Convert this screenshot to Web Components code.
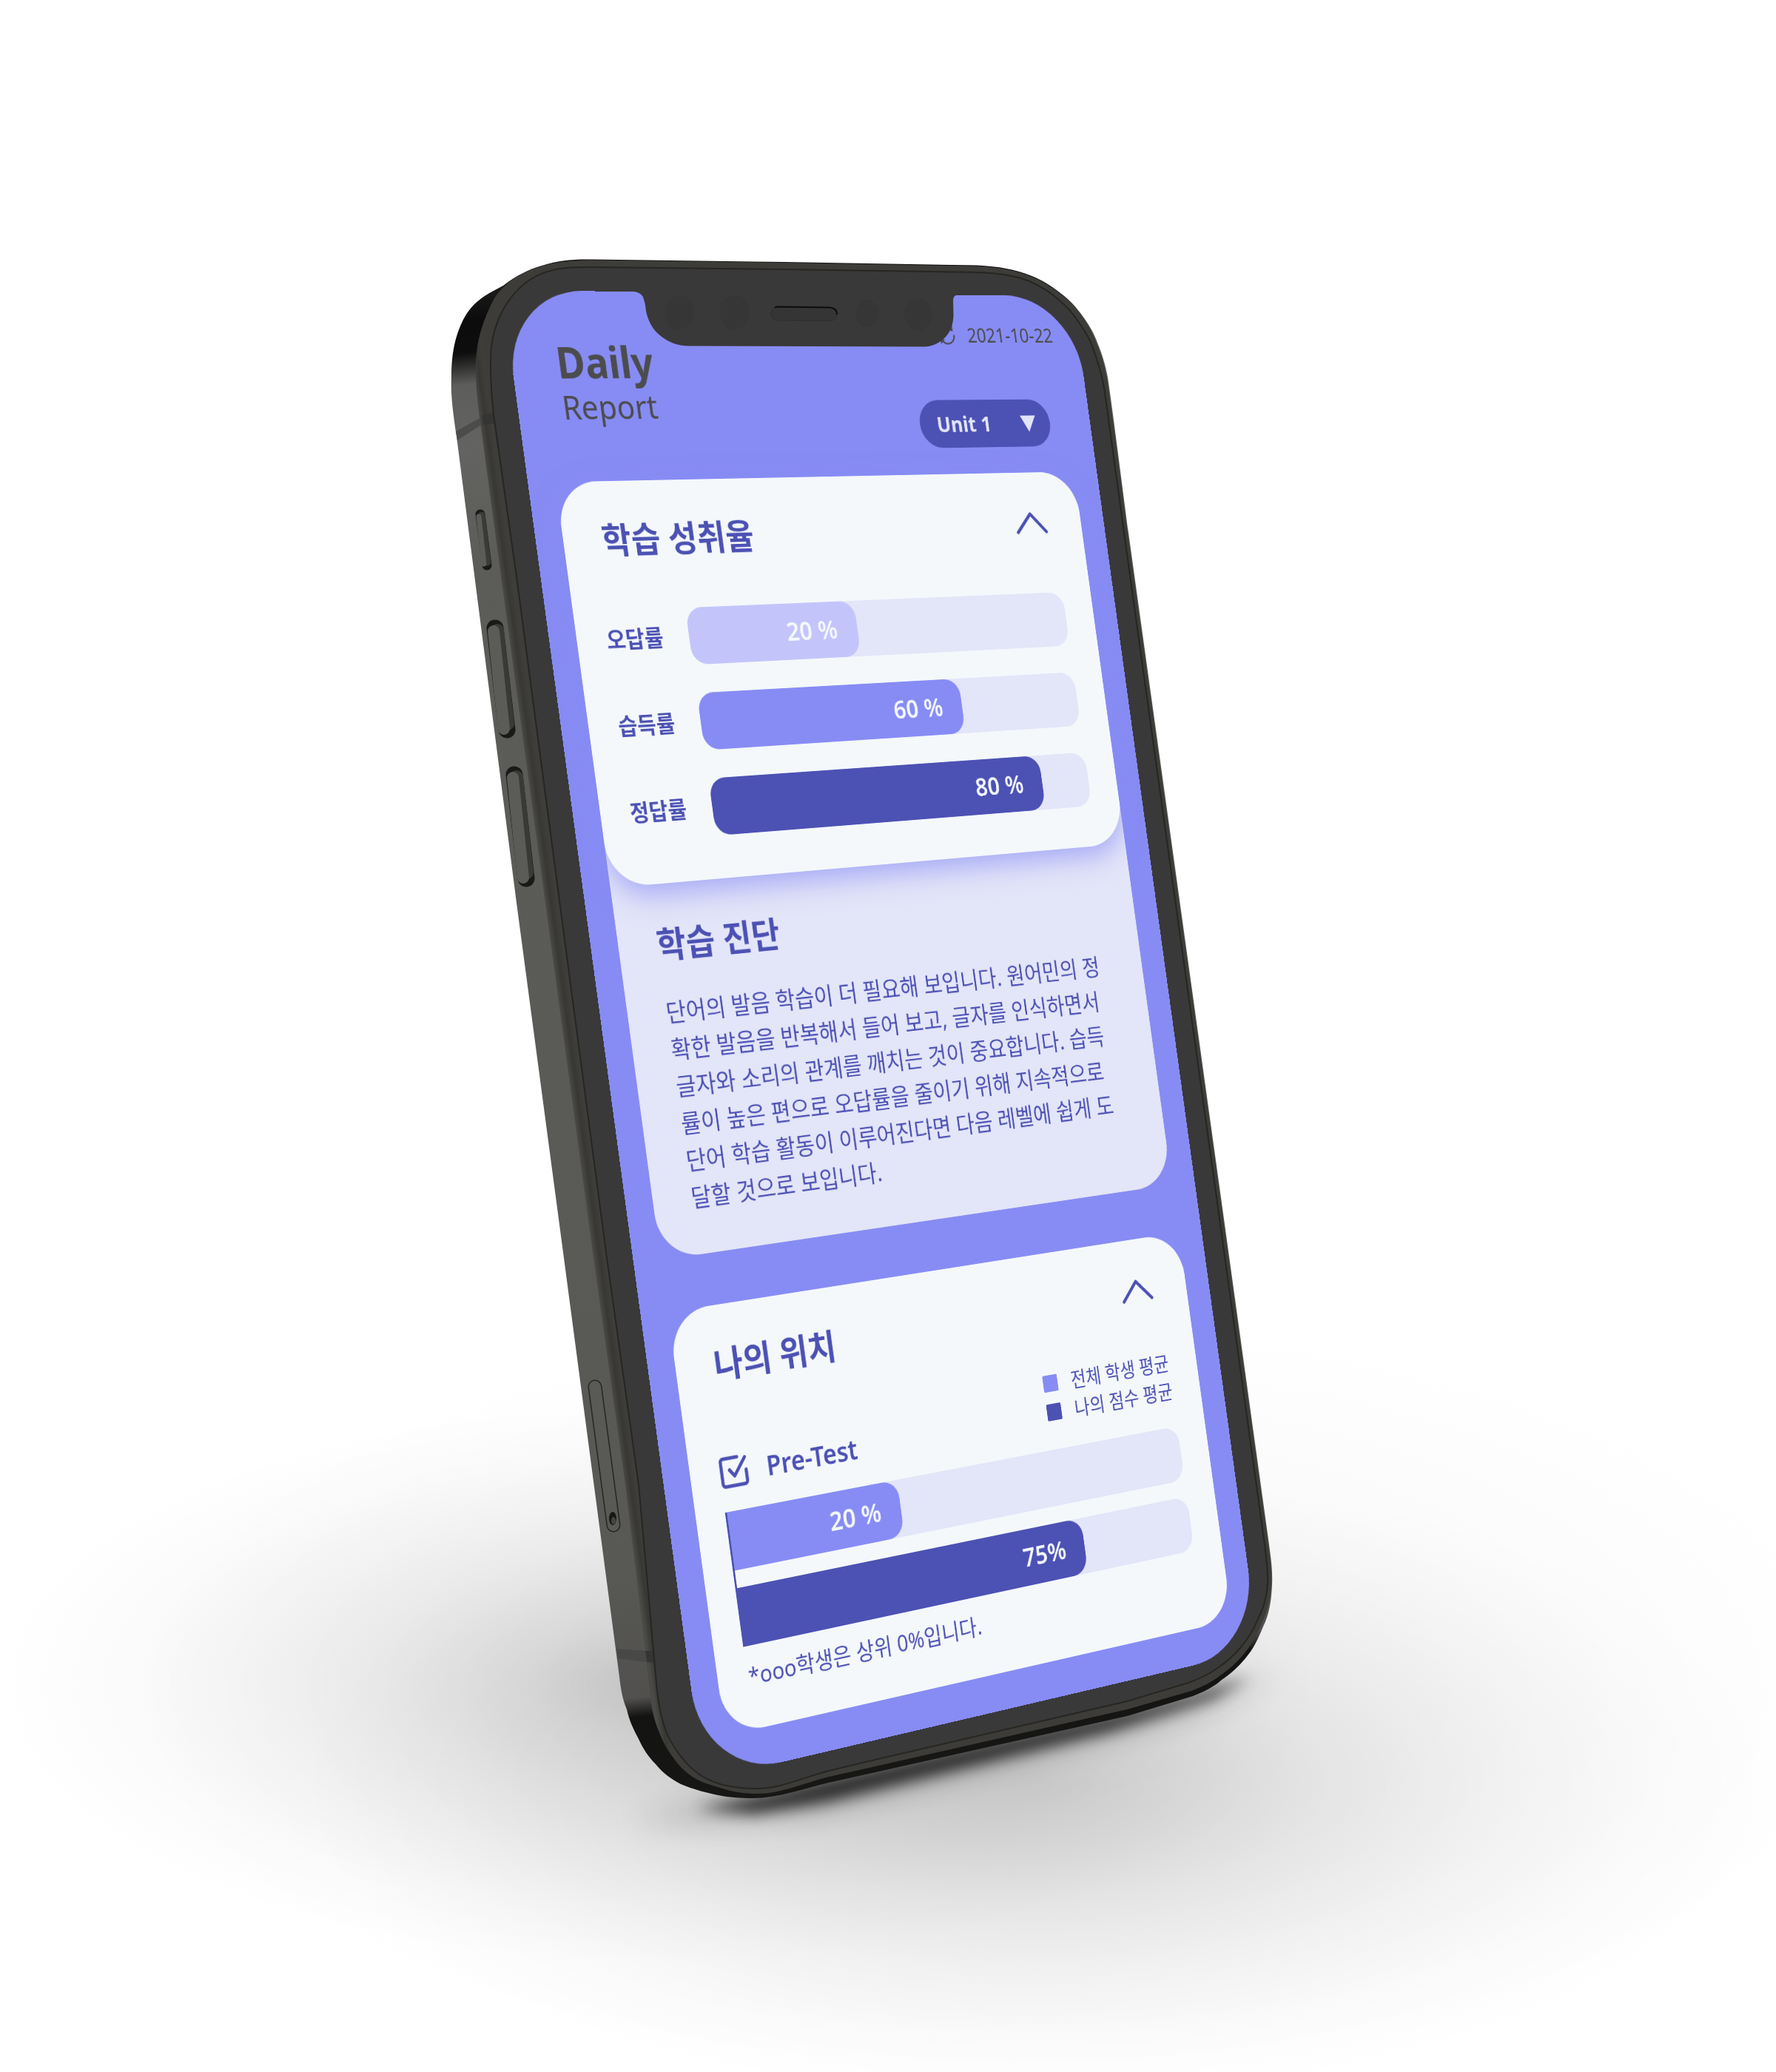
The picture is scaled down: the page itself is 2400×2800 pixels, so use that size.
<!DOCTYPE html>
<html lang="ko">
<head>
<meta charset="utf-8">
<meta name="viewport" content="width=device-width, initial-scale=1">
<title>Daily Report</title>
<style>
  html { background: #fff; }
  body { margin: 0; font-family: "Noto Sans", "Noto Sans CJK KR", sans-serif; color: #4c51b4; }
</style>
</head>
<body>
<phone-stage>
  <report-app>
    <report-header slot="header" date="2021-10-22"></report-header>
    <stacked-card>
      <report-card heading="학습 성취율" raised>
        <rate-list>
          <rate-row label="오답률" value="20 %" fill="43" tone="pale"></rate-row>
          <rate-row label="습득률" value="60 %" fill="68" tone="mid"></rate-row>
          <rate-row label="정답률" value="80 %" fill="87" tone="deep"></rate-row>
        </rate-list>
      </report-card>
      <diagnosis-note slot="below" heading="학습 진단">단어의 발음 학습이 더 필요해 보입니다. 원어민의 정확한 발음을 반복해서 들어 보고, 글자를 인식하면서 글자와 소리의 관계를 깨치는 것이 중요합니다. 습득률이 높은 편으로 오답률을 줄이기 위해 지속적으로 단어 학습 활동이 이루어진다면 다음 레벨에 쉽게 도달할 것으로 보입니다.</diagnosis-note>
    </stacked-card>
    <report-card heading="나의 위치">
      <rank-chart test="Pre-Test">
        <rate-bar value="20 %" fill="36" tone="mid" flush></rate-bar>
        <rate-bar value="75%" fill="75" tone="deep" flush></rate-bar>
        <span slot="note">*ooo학생은 상위 0%입니다.</span>
      </rank-chart>
    </report-card>
  </report-app>
</phone-stage>

<script>
const define = (name, html, setup) => {
  const template = document.createElement('template');
  template.innerHTML = html;
  customElements.define(name, class extends HTMLElement {
    connectedCallback() {
      if (this.shadowRoot) return;
      this.attachShadow({ mode: 'open' }).append(template.content.cloneNode(true));
      if (setup) setup(this, this.shadowRoot);
    }
  });
};

/* Maps a w×h rectangle onto four corners (top-left, top-right, bottom-right, bottom-left). */
function planeMatrix(w, h, [p0, p1, p2, p3]) {
  const dx1 = p1[0] - p2[0], dx2 = p3[0] - p2[0], dx3 = p0[0] - p1[0] + p2[0] - p3[0];
  const dy1 = p1[1] - p2[1], dy2 = p3[1] - p2[1], dy3 = p0[1] - p1[1] + p2[1] - p3[1];
  const den = dx1 * dy2 - dx2 * dy1;
  const g = (dx3 * dy2 - dx2 * dy3) / den, k = (dx1 * dy3 - dx3 * dy1) / den;
  const a = p1[0] - p0[0] + g * p1[0], b = p3[0] - p0[0] + k * p3[0];
  const d = p1[1] - p0[1] + g * p1[1], e = p3[1] - p0[1] + k * p3[1];
  return `matrix3d(${[a / w, d / w, 0, g / w, b / h, e / h, 0, k / h, 0, 0, 1, 0, p0[0], p0[1], 0, 1].join(',')})`;
}

define('phone-stage', `
<style>
  :host { display: block; position: relative; width: 100%; aspect-ratio: 2400 / 2800; overflow: hidden; }
  svg { position: absolute; inset: 0; width: 100%; height: 100%; pointer-events: none; }
  .plane { position: absolute; top: 0; left: 0; width: 975px; height: 2110px; transform-origin: 0 0;
    border-radius: 126px; overflow: hidden; background: #878cf4; }
</style>
<svg viewBox="0 0 2400 2800" aria-hidden="true">
  <defs>
    <filter id="b1" x="-50%" y="-50%" width="200%" height="200%"><feGaussianBlur stdDeviation="10"/></filter>
    <filter id="b2" x="-50%" y="-50%" width="200%" height="200%"><feGaussianBlur stdDeviation="20"/></filter>
    <radialGradient id="faint"><stop offset="0" stop-color="#000" stop-opacity=".03"/><stop offset=".5" stop-color="#000" stop-opacity=".022"/><stop offset="1" stop-color="#000" stop-opacity="0"/></radialGradient>
    <radialGradient id="left"><stop offset="0" stop-color="#000" stop-opacity=".19"/><stop offset=".2" stop-color="#000" stop-opacity=".125"/><stop offset=".4" stop-color="#000" stop-opacity=".08"/><stop offset=".6" stop-color="#000" stop-opacity=".045"/><stop offset=".8" stop-color="#000" stop-opacity=".016"/><stop offset="1" stop-color="#000" stop-opacity="0"/></radialGradient>
    <radialGradient id="right"><stop offset="0" stop-color="#000" stop-opacity=".17"/><stop offset=".2" stop-color="#000" stop-opacity=".13"/><stop offset=".4" stop-color="#000" stop-opacity=".08"/><stop offset=".6" stop-color="#000" stop-opacity=".043"/><stop offset=".8" stop-color="#000" stop-opacity=".016"/><stop offset="1" stop-color="#000" stop-opacity="0"/></radialGradient>
    <linearGradient id="side" gradientUnits="userSpaceOnUse" x1="600" y1="330" x2="830" y2="2450">
      <stop offset="0" stop-color="#111"/><stop offset=".03" stop-color="#1c1c1b"/><stop offset=".05" stop-color="#0b0b0b"/><stop offset=".07" stop-color="#0e0e0e"/>
      <stop offset=".09" stop-color="#5d5d5b"/><stop offset=".13" stop-color="#636361"/><stop offset=".2" stop-color="#5c5c59"/>
      <stop offset=".85" stop-color="#585855"/><stop offset=".929" stop-color="#51504e"/><stop offset=".941" stop-color="#131312"/><stop offset="1" stop-color="#171715"/>
    </linearGradient>
    <linearGradient id="rim" gradientUnits="userSpaceOnUse" x1="745" y1="1280" x2="767" y2="1277">
      <stop offset="0" stop-color="#4a4a47"/><stop offset=".35" stop-color="#383734"/><stop offset=".7" stop-color="#3f3e3a"/><stop offset="1" stop-color="#3d3c39"/>
    </linearGradient>
  </defs>
  <ellipse cx="1350" cy="2290" rx="1200" ry="520" fill="url(#faint)"/>
  <ellipse cx="890" cy="2275" rx="900" ry="380" fill="url(#left)"/>
  <ellipse cx="1400" cy="2410" rx="1000" ry="430" fill="url(#right)"/>
  <path d="M850 2462L1010 2424L1730 2262L1600 2316L1100 2446Z" fill="#000" opacity=".28" filter="url(#b2)"/>
  <path d="M940 2444L1030 2426L1120 2404L1523 2312L1610 2290L1690 2266L1640 2295L1500 2340L1120 2434L1020 2451Z" fill="#000" opacity=".74" filter="url(#b1)"/>

  <path d="M610 510C610 475 616 452 626 432C640 405 660 397 680 386C698 372 715 364 732 359C752 353 768 350 800 350.500L1060 354L1320 358.500C1350 360 1372 364 1393 372.500C1407 378 1417 384 1427 391.500C1442 402 1451 411 1460 423C1470 436 1478 449 1483 463C1490 480 1494 494 1497 510C1501 535 1512 620 1525 720L1653 1640L1714 2080C1717 2103 1720 2120 1719 2142C1718 2164 1715 2182 1707 2198C1700 2215 1694 2228 1683 2241C1673 2253 1663 2262 1651 2270C1640 2280 1627 2286 1612 2292L1523 2319L1174 2397L1120 2409C1085 2417 1052 2430 1017 2430C1000 2430 988 2429 976 2427C955 2423 937 2418 920 2411C905 2403 896 2396 886 2384C876 2374 869 2363 863 2350C856 2337 850 2324 847 2310C841 2296 839 2283 837 2266L762 1700L698 1220L617 590C611 550 609 530 610 510Z" fill="url(#side)"/>
  <path d="M616 583L652 563L667 557L668 571L652 573L618 595Z" fill="#4c4c4b"/>

  <path d="M643 500C642 465 652 433 668 403C676 391 688 380 700 373C722 361 748 352 800 351.500L1060 355L1320 359.500C1350 361 1372 365 1393 373.500C1407 379 1417 385 1427 392.500C1442 403 1451 412 1460 424C1470 437 1477 450 1482 464C1489 481 1493 495 1496 511C1500 536 1511 620 1524 720L1652 1640L1713 2080C1716 2103 1719 2120 1718 2139C1717 2160 1713 2178 1705 2194C1699 2210 1691 2222 1681 2235C1671 2247 1661 2256 1649 2264C1638 2273 1625 2279 1610 2285L1523 2310L1174 2389L1120 2401C1085 2410 1055 2424 1022 2424C1002 2424 984 2420 967 2414C950 2409 941 2405 933 2399C923 2392 915 2383 909 2374C901 2364 895 2352 891 2341C885 2328 881 2312 879 2295L872 2230L845 2006L802 1700L677 779L650 578C645 545 643 520 643 500Z" fill="url(#rim)"/>
  <path d="M651 562L668 556L670 572L653 574ZM872 2231L888 2231L890 2247L874 2246Z" fill="#353534"/>
  <path d="M833 2228L872 2231L874 2246L835 2241Z" fill="#484847"/>

  <path d="M663 490C663 465 666 450 675 428C684 409 698 390 716 378C738 364 760 360.500 800 361L1060 364L1320 368C1350 369 1372 372 1391 380C1407 387 1418 394 1427 402C1441 413 1450 423 1458 436C1468 449 1475 463 1480 479C1486 496 1490 510 1493 530C1497 555 1508 640 1519 720L1647 1640L1708 2080C1711 2103 1714 2120 1713 2139C1712 2158 1708 2173 1700 2188C1694 2203 1686 2215 1676 2227C1666 2239 1656 2247 1644 2255C1632 2264 1620 2269 1606 2274L1523 2299L1174 2380L1120 2393C1085 2402 1055 2417 1022 2417C1003 2417 988 2415 973 2411C958 2406 948 2401 940 2394C930 2386 922 2377 916 2368C909 2358 904 2350 901 2342C895 2327 890 2310 887 2275L863 2006L820 1700L698 779L667 560C664 535 663 510 663 490Z" fill="#393939" stroke="#262622" stroke-width="2"/>

  <g stroke-linecap="round" fill="none">
    <path d="M649 695L658 764" stroke="#191918" stroke-width="13"/><path d="M651 696L659 760" stroke="#3a3a38" stroke-width="9"/><path d="M647 698L654 762" stroke="#5b5b58" stroke-width="7"/>
    <path d="M669 849L685 986" stroke="#191918" stroke-width="23"/><path d="M672 852L686 978" stroke="#393937" stroke-width="18"/><path d="M667 853L681 985" stroke="#5b5b58" stroke-width="16"/>
    <path d="M695 1047L711 1187" stroke="#191918" stroke-width="23"/><path d="M698 1050L712 1179" stroke="#393937" stroke-width="18"/><path d="M693 1051L707 1186" stroke="#5b5b58" stroke-width="16"/>
    <path d="M804 1874L829 2061" stroke="#262624" stroke-width="19"/><path d="M804 1874L829 2061" stroke="#595956" stroke-width="16"/>
  </g>
  <ellipse cx="828" cy="2052" rx="5" ry="9" fill="#171716"/><ellipse cx="829" cy="2055" rx="3" ry="5" fill="#454543"/>
</svg>
<div class="plane"><slot></slot></div>
<svg viewBox="0 0 2400 2800" aria-hidden="true">
  <path d="M850 385L852 393.500C863 394 869 398 870 405C873 412 872 420 875 428C880 443 888 451 897 457C907 464 917 467 930 467.500L1250 468.500C1262 468 1273 461 1279 454C1286 445 1288 437 1288.500 426L1288 407C1288 401 1290 398.500 1296 398.500L1300 388Z" fill="#393939"/>
  <g fill="#363636"><ellipse cx="918" cy="422" rx="20" ry="23"/><ellipse cx="993" cy="422" rx="20" ry="23"/><ellipse cx="1172" cy="424" rx="16" ry="18"/><ellipse cx="1241" cy="425" rx="19" ry="21"/></g>
  <path d="M1051 414.500L1121 415.500C1128 416 1131 420 1131 424.500C1131 429 1128 432 1124 433.500L1052 433C1045 433 1042 429 1042 424C1042 419 1045 415 1051 414.500Z" fill="#353535" stroke="#2e2e2e" stroke-width="1"/>
  <path d="M1047 415.500L1051 414.500L1121 415.500C1128 416 1131 420 1131 425" fill="none" stroke="#0c0c0c" stroke-width="2"/>
</svg>
`, (host, root) => {
  const plane = root.querySelector('.plane');
  const corners = [[678, 392.2], [1449.4, 400.2], [1702, 2230], [951, 2406.5]];
  const fit = () => {
    const s = host.clientWidth / 2400;
    plane.style.transform = planeMatrix(975, 2110, corners.map(p => [p[0] * s, p[1] * s]));
  };
  fit();
  new ResizeObserver(fit).observe(host);
});

define('report-app', `
<style>
  :host { display: flex; flex-direction: column; gap: 40px; height: 100%; box-sizing: border-box; padding-top: 42px; }
  main { display: flex; flex-direction: column; gap: 74px; padding: 0 43px; }
</style>
<slot name="header"></slot>
<main><slot></slot></main>`);

define('report-header', `
<style>
  :host { display: flex; justify-content: space-between; align-items: flex-start; padding: 0 48px 0 70px; color: #4c4c4e; }
  h1 { margin: 0; padding-top: 26px; font-weight: 400; font-size: 48px; line-height: 62px; }
  strong { display: block; font-size: 62px; line-height: 68px; font-weight: 700; }
  .tools { display: flex; flex-direction: column; align-items: flex-end; gap: 79px; }
  .date { display: flex; align-items: center; gap: 20px; font-size: 30px; line-height: 40px; }
  .date svg { width: 32px; height: 32px; }
  .unit { position: relative; margin-right: 27px; }
  select { appearance: none; display: block; width: 236px; height: 73px; border: 0; border-radius: 37px; padding: 0 0 0 30px;
    background: #4c51b4; color: #e2e4f8; font: 700 33px/40px "Noto Sans", "Noto Sans CJK KR", sans-serif; }
  .unit svg { position: absolute; right: 26px; top: 25px; width: 28px; height: 25px; pointer-events: none; }
</style>
<h1><strong>Daily</strong>Report</h1>
<div class="tools">
  <div class="date">
    <svg viewBox="0 0 24 24" fill="none" stroke="currentColor" stroke-width="2" aria-hidden="true">
      <path d="M21.500 11.500a9.500 9.500 0 0 1-16 7.500M2.500 12.500a9.500 9.500 0 0 1 16-7.500"/>
      <path d="M20.500 1v6.500l-6-1.500zM2.500 22v-6.500l6 1.500z" fill="currentColor" stroke="none"/>
    </svg>
    <time></time>
  </div>
  <div class="unit">
    <select aria-label="Unit"><option>Unit 1</option></select>
    <svg viewBox="0 0 28 25" aria-hidden="true"><path d="M0 0h28L14 25z" fill="#e2e4f8"/></svg>
  </div>
</div>`, (host, root) => { root.querySelector('time').textContent = host.getAttribute('date'); });

define('stacked-card', `
<style>
  :host { display: flex; flex-direction: column; background: #e3e5f8; border-radius: 65px; }
</style>
<slot></slot><slot name="below"></slot>`);

define('report-card', `
<style>
  :host { display: block; background: #f4f8fb; border-radius: 65px; padding: 48px 52px 0 47px; }
  :host([raised]) { box-shadow: 0 14px 42px rgba(135, 140, 244, .68); }
  header { display: flex; justify-content: space-between; align-items: flex-start; padding: 0 11px 0 14px; }
  h2 { margin: 0; font-size: 51px; line-height: 72px; font-weight: 700; }
  button { appearance: none; border: 0; background: none; color: inherit; padding: 13px 0; height: 60px; }
  svg { display: block; width: 58px; height: 34px; }
</style>
<header><h2></h2><button type="button" aria-label="접기"><svg viewBox="0 0 58 34" fill="none" stroke="currentColor" stroke-width="5" stroke-linecap="round" stroke-linejoin="round"><path d="M3 31L29 3L55 31"/></svg></button></header>
<slot></slot>`, (host, root) => { root.querySelector('h2').textContent = host.getAttribute('heading'); });

define('rate-list', `
<style>
  :host { display: flex; flex-direction: column; gap: 41px; padding: 66px 0 62px; }
</style>
<slot></slot>`);

const barCss = `
  .track { flex: 1; height: 83px; border-radius: 26px; background: #e3e5f8; }
  .fill { display: flex; align-items: center; justify-content: flex-end; box-sizing: border-box; height: 100%; padding: 0 34px 4px 0;
    border-radius: 26px; color: #f4f8fb; font-size: 38px; line-height: 56px; font-weight: 600; }
  :host([flush]) .track, :host([flush]) .fill { border-top-left-radius: 0; border-bottom-left-radius: 0; }
  :host([tone=pale]) .fill { background: #c3c5fa; }
  :host([tone=mid]) .fill { background: #878cf4; }
  :host([tone=deep]) .fill { background: #4c51b4; }`;
const setBar = (host, root) => {
  const fill = root.querySelector('.fill');
  fill.style.width = host.getAttribute('fill') + '%';
  fill.textContent = host.getAttribute('value');
};

define('rate-bar', `<style>:host { display: flex; } ${barCss}</style><div class="track"><div class="fill"></div></div>`, setBar);

define('rate-row', `
<style>
  :host { display: flex; align-items: center; }
  .label { width: 133px; font-size: 33px; line-height: 48px; font-weight: 700; white-space: nowrap; }
  ${barCss}
</style>
<span class="label"></span><div class="track"><div class="fill"></div></div>`, (host, root) => {
  root.querySelector('.label').textContent = host.getAttribute('label');
  setBar(host, root);
});

define('diagnosis-note', `
<style>
  :host { display: block; padding: 49px 58px 54px; }
  h2 { margin: 0; padding-left: 3px; font-size: 51px; line-height: 74px; font-weight: 700; }
  p { margin: 34px 0 0; padding-left: 3px; font-size: 35px; line-height: 53px; }
</style>
<h2></h2><p><slot></slot></p>`, (host, root) => { root.querySelector('h2').textContent = host.getAttribute('heading'); });

define('rank-chart', `
<style>
  :host { display: block; padding-bottom: 49px; }
  .top { display: flex; justify-content: space-between; align-items: flex-end; padding-top: 52px; }
  label { position: relative; display: flex; align-items: center; gap: 28px; height: 43px; font-size: 39px; line-height: 43px; font-weight: 600; }
  input { position: absolute; opacity: 0; margin: 0; width: 50px; height: 50px; }
  label svg { width: 50px; height: 50px; margin-left: -2px; }
  ul { list-style: none; margin: 0; padding: 0; font-size: 30px; line-height: 43px; }
  li { display: flex; align-items: center; gap: 24px; }
  li::before { content: ""; width: 26px; height: 25px; border-radius: 2px; background: #878cf4; }
  li + li::before { background: #4c51b4; }
  .bars { display: flex; flex-direction: column; gap: 25px; margin-top: 34px; border-left: 3px solid #4c51b4; }
  p { margin: 18px 0 0; padding-left: 2px; font-size: 33px; line-height: 50px; }
</style>
<div class="top">
  <label><input type="checkbox" checked>
    <svg viewBox="0 0 24 24" fill="none" stroke="currentColor" stroke-width="2.400" stroke-linecap="round" stroke-linejoin="round" aria-hidden="true"><path d="M15.500 2.500H4.500a2 2 0 0 0-2 2v15a2 2 0 0 0 2 2h15a2 2 0 0 0 2-2V12"/><path d="M8.700 10.500L12.200 15L21.500 3.500"/></svg>
    <span></span></label>
  <ul><li>전체 학생 평균</li><li>나의 점수 평균</li></ul>
</div>
<div class="bars"><slot></slot></div>
<p><slot name="note"></slot></p>`, (host, root) => { root.querySelector('label span').textContent = host.getAttribute('test'); });
</script>
</body>
</html>
